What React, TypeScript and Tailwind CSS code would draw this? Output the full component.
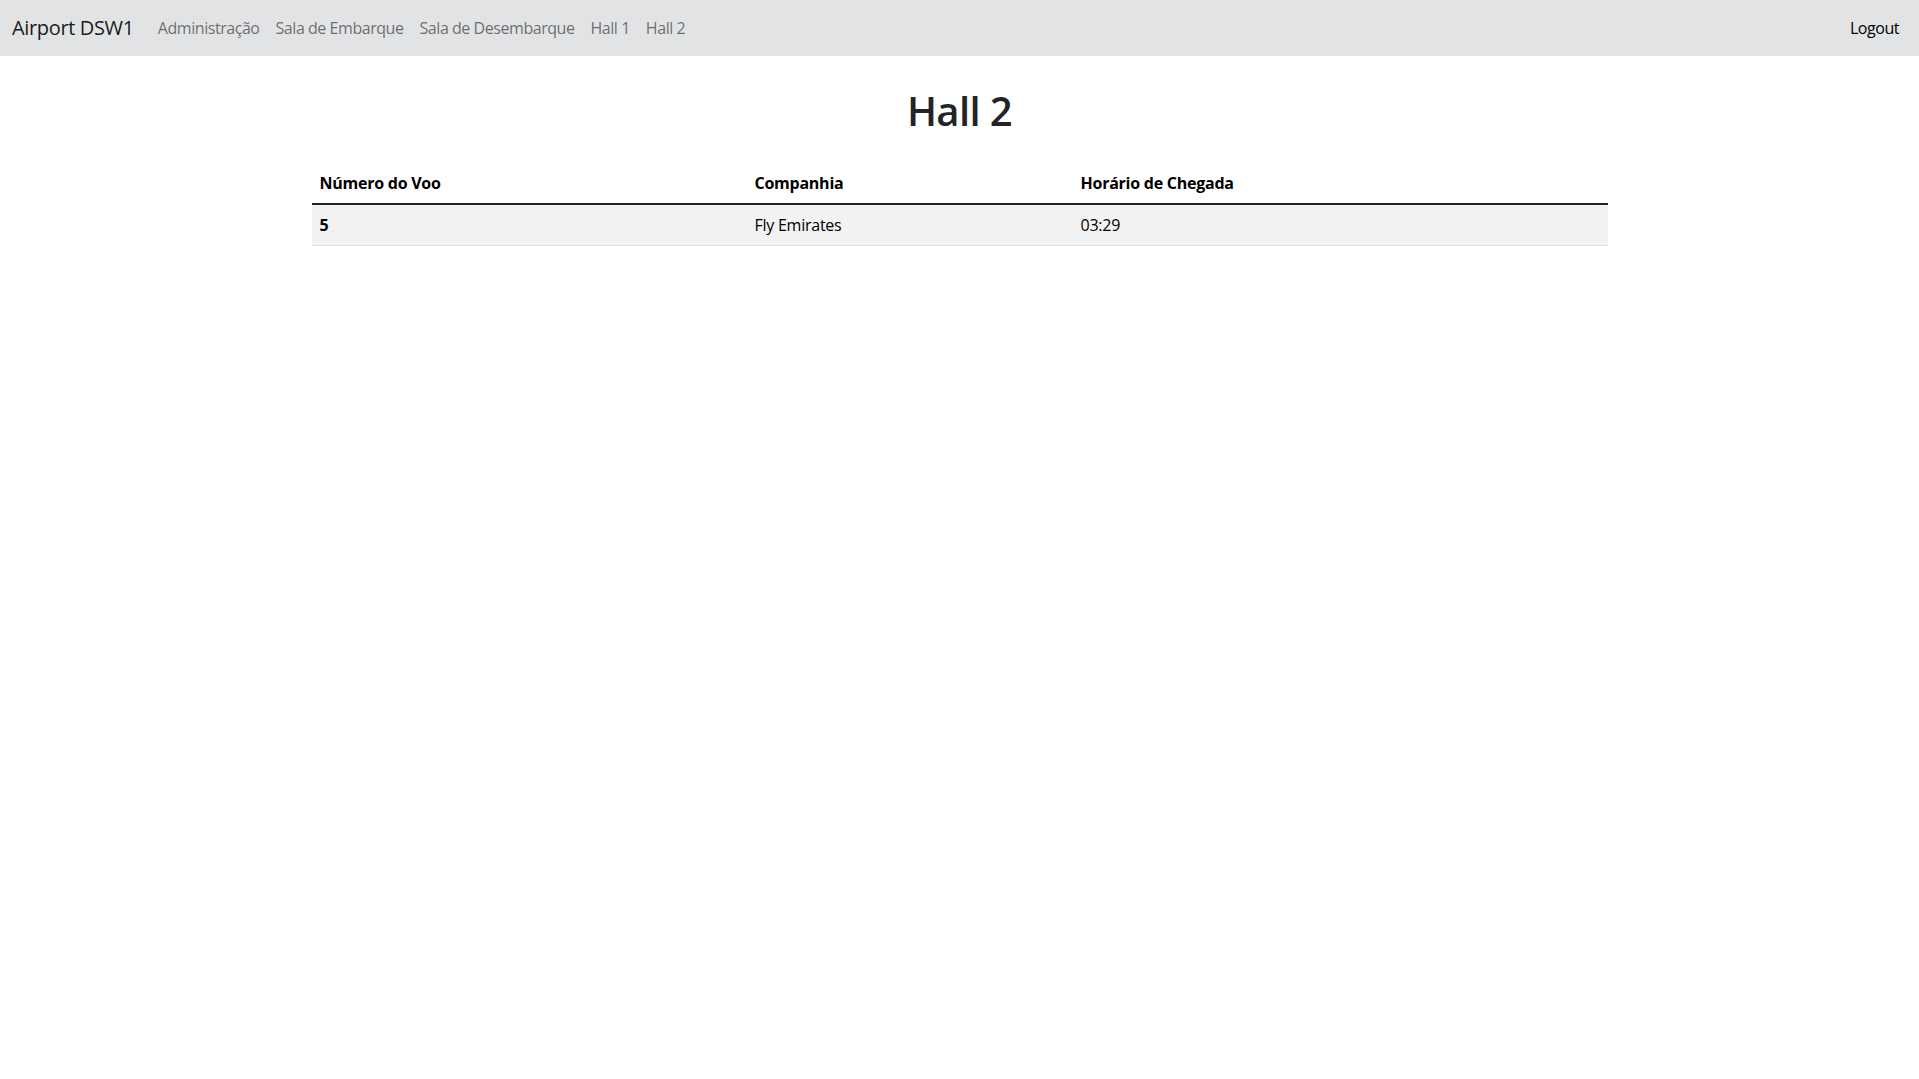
import React from 'react';

// ============================================================================
// DATA
// ============================================================================

const navLinks = ['Administração', 'Sala de Embarque', 'Sala de Desembarque', 'Hall 1', 'Hall 2'];

const flights = [{ numero: '5', companhia: 'Fly Emirates', chegada: '03:29' }];

// ============================================================================
// NAVBAR
// ============================================================================

function Navbar() {
  return (
    <nav className="bg-[#e2e3e5] py-2">
      <div className="px-3 flex items-center">
        <a href="#" className="text-[20px] leading-[30px] py-[5px] mr-4 text-black/90 tracking-[-0.35px]">
          Airport DSW1
        </a>
        <ul className="flex items-center">
          {navLinks.map((link) => (
            <li key={link}>
              <a href="#" className="block px-2 py-2 text-[16px] leading-6 text-black/55 tracking-[-0.45px]">
                {link}
              </a>
            </li>
          ))}
        </ul>
        <a href="#" className="ml-auto block px-2 py-2 text-[16px] leading-6 text-black tracking-[-0.45px]">
          Logout
        </a>
      </div>
    </nav>
  );
}

// ============================================================================
// MAIN
// ============================================================================

export default function App() {
  return (
    <div
      className="min-h-screen bg-white text-[#212529]"
      style={{ fontFamily: '"Open Sans", "Noto Sans", sans-serif' }}
    >
      <Navbar />
      <main className="w-[1320px] mx-auto px-3">
        <h1 className="text-center text-[40px] leading-[48px] font-semibold mt-[31px] mb-[28px] tracking-[-0.6px]">
          Hall 2
        </h1>
        <table className="w-full border-collapse text-[16px] leading-6 text-[#212529] tracking-[-0.25px]">
          <thead>
            <tr className="border-b-2 border-[#212529] text-black">
              <th className="w-[435px] text-left font-bold px-2 py-2">Número do Voo</th>
              <th className="w-[326px] text-left font-bold px-2 py-2">Companhia</th>
              <th className="text-left font-bold px-2 py-2">Horário de Chegada</th>
            </tr>
          </thead>
          <tbody>
            {flights.map((f) => (
              <tr key={f.numero} className="bg-[#f2f2f2] border-b border-[#dee2e6] text-black">
                <th className="text-left font-bold px-2 py-2">{f.numero}</th>
                <td className="px-2 py-2">{f.companhia}</td>
                <td className="px-2 py-2">{f.chegada}</td>
              </tr>
            ))}
          </tbody>
        </table>
      </main>
    </div>
  );
}
